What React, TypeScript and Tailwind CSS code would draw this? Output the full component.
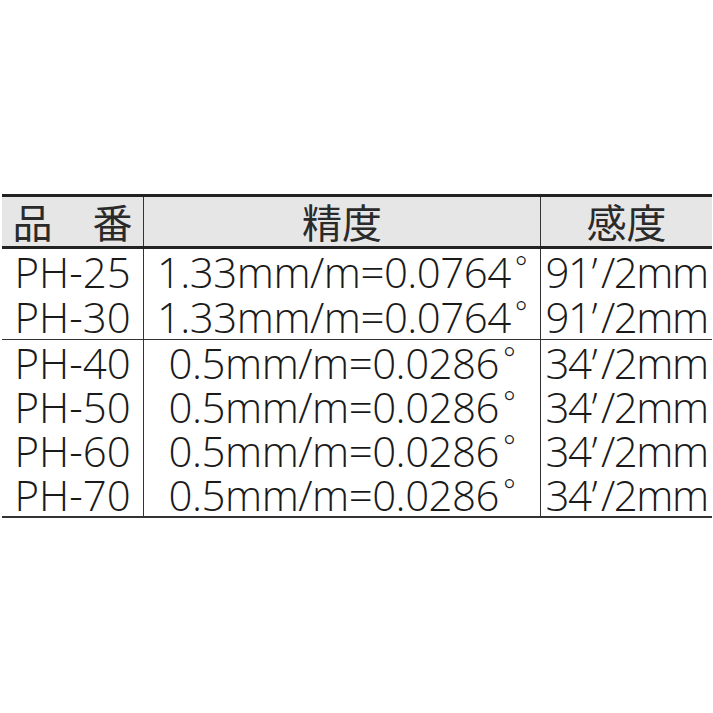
const rows1 = [
  ["PH-25", "1.33mm/m=0.0764", "91", "/2mm"],
  ["PH-30", "1.33mm/m=0.0764", "91", "/2mm"],
];
const rows2 = [
  ["PH-40", "0.5mm/m=0.0286", "34", "/2mm"],
  ["PH-50", "0.5mm/m=0.0286", "34", "/2mm"],
  ["PH-60", "0.5mm/m=0.0286", "34", "/2mm"],
  ["PH-70", "0.5mm/m=0.0286", "34", "/2mm"],
];

const font = { fontFamily: '"Open Sans", "Noto Sans CJK JP", sans-serif' };

const Row = ({ cells, tall }: { cells: string[]; tall?: boolean }) => (
  <div
    className={
      tall
        ? "grid grid-cols-[142px_397px_171px] h-[45px] text-[42px] leading-[45px] font-light text-[#1a1a1a]"
        : "grid grid-cols-[142px_397px_171px] h-[44px] text-[42px] leading-[45px] font-light text-[#1a1a1a]"
    }
  >
    <div className="text-center border-r-[1.5px] border-[#333] whitespace-nowrap">{cells[0]}</div>
    <div className="text-center border-r-[1.5px] border-[#333] whitespace-nowrap tracking-[-0.5px]">
      {cells[1]}
      <span className="relative -top-[10px] ml-[4px] text-[30px] leading-none">°</span>
    </div>
    <div className="text-center whitespace-nowrap tracking-[-1.5px]">
      {cells[2]}
      <span className="ml-[1px] mr-[5px]">’</span>
      {cells[3]}
    </div>
  </div>
);

export default function App() {
  return (
    <div className="w-[713px] h-[713px] bg-white pt-[194px] pl-[2px]" style={font}>
      <div className="w-[710px]">
        <div className="border-t-[3px] border-b-[3px] border-[#222] bg-[#e6e6e6] grid grid-cols-[142px_397px_171px] h-[55px] text-[40px] leading-[49px] text-[#2a2a2a]" style={{ fontFamily: '"Noto Sans CJK JP", sans-serif' }}>
          <div className="text-center border-r-[1.5px] border-[#333]">品　番</div>
          <div className="text-center border-r-[1.5px] border-[#333]">精度</div>
          <div className="text-center">感度</div>
        </div>
        <div className="border-b-[1.5px] border-[#333]">
          {rows1.map((r) => <Row key={r[0]} cells={r} tall />)}
        </div>
        <div className="border-b-2 border-[#333]">
          {rows2.map((r) => <Row key={r[0]} cells={r} />)}
        </div>
      </div>
    </div>
  );
}
